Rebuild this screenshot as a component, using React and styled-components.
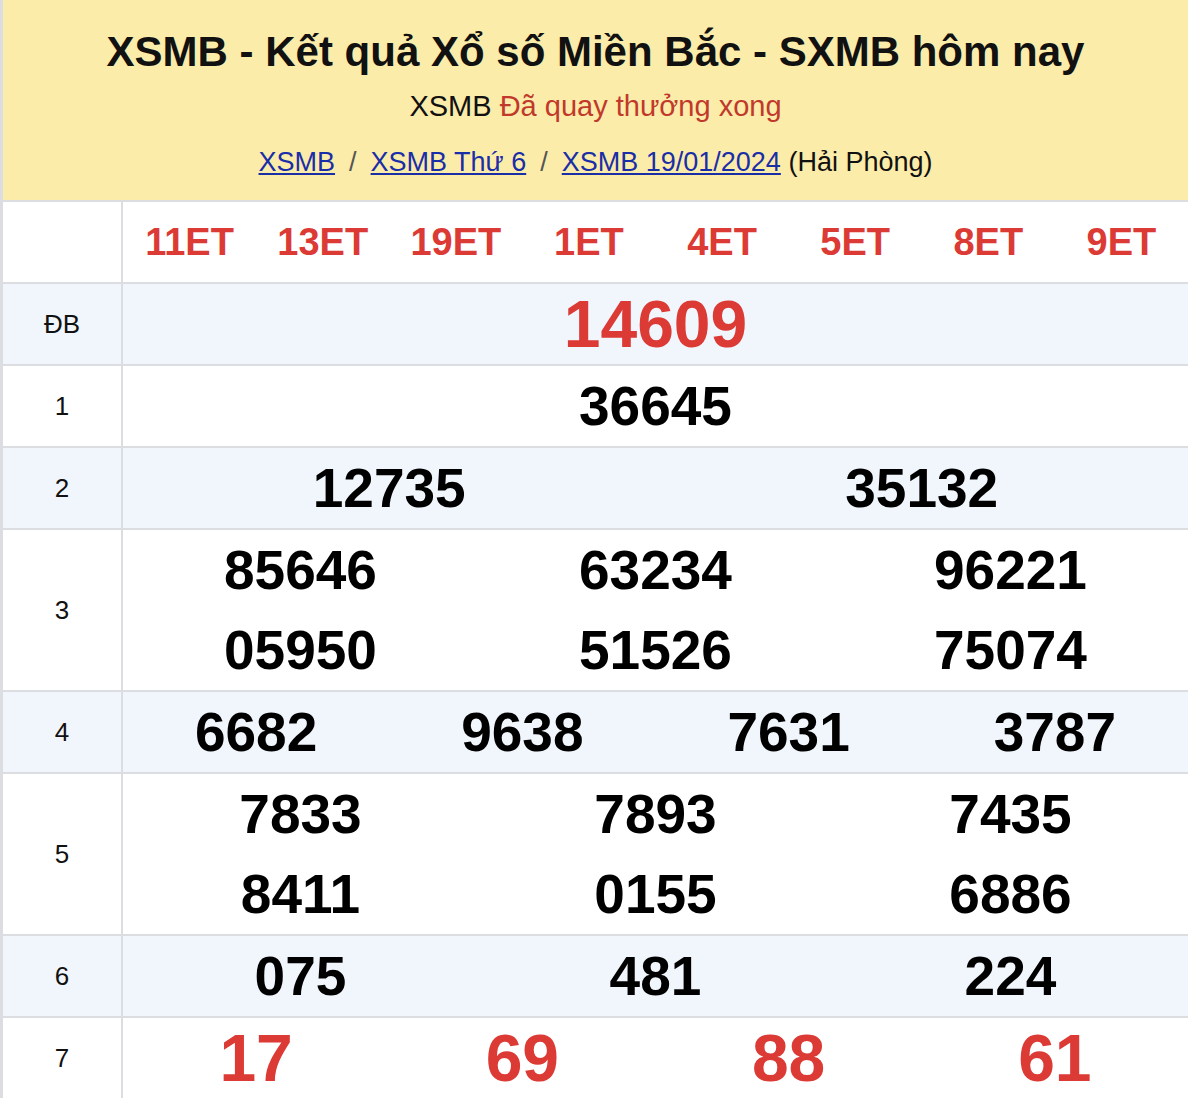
import React from 'react'
import styled, { createGlobalStyle } from 'styled-components'

const Global = createGlobalStyle`
  body { margin: 0; background: #fff; font-family: "Liberation Sans", Arial, sans-serif; }
`

const Wrap = styled.div`
  width: 1188px;
  border-left: 3px solid #dcdde1;
  box-sizing: border-box;
`

const Head = styled.div`
  background: #fcecaa;
  height: 200px;
  box-sizing: border-box;
  padding-top: 26px;
  text-align: center;
  color: #111;
`

const Title = styled.h1`
  margin: 0;
  font-size: 42px;
  font-weight: bold;
  line-height: 52px;
`

const Sub = styled.div`
  font-size: 29px;
  line-height: 34px;
  margin-top: 11px;
  span { color: #c0392b; }
`

const Crumbs = styled.div`
  font-size: 27px;
  line-height: 34px;
  margin-top: 22px;
  a { color: #1a2ea8; text-decoration: underline; }
  i { font-style: normal; color: #555; margin: 0 14px; }
`

const Row = styled.div`
  display: flex;
  border-top: 2px solid #dcdde1;
  background: ${p => (p.$alt ? '#f1f6fd' : '#fff')};
`

const Label = styled.div`
  width: 118px;
  flex: none;
  border-right: 2px solid #dcdde1;
  display: flex;
  align-items: center;
  justify-content: center;
  font-size: 26px;
  color: #111;
`

const Grid = styled.div`
  flex: 1;
  display: grid;
  grid-template-columns: repeat(${p => p.$cols}, 1fr);
  grid-auto-rows: 80px;
  align-items: center;
`

const Num = styled.div`
  text-align: center;
  font-weight: bold;
  font-size: ${p => p.$size || 55}px;
  color: ${p => (p.$red ? '#dc3a35' : '#000')};
`

const rows = [
  { l: 'ĐB', c: 1, n: ['14609'], red: true, size: 66 },
  { l: '1', c: 1, n: ['36645'] },
  { l: '2', c: 2, n: ['12735', '35132'] },
  { l: '3', c: 3, n: ['85646', '63234', '96221', '05950', '51526', '75074'] },
  { l: '4', c: 4, n: ['6682', '9638', '7631', '3787'] },
  { l: '5', c: 3, n: ['7833', '7893', '7435', '8411', '0155', '6886'] },
  { l: '6', c: 3, n: ['075', '481', '224'] },
  { l: '7', c: 4, n: ['17', '69', '88', '61'], red: true, size: 66 },
]

const codes = ['11ET', '13ET', '19ET', '1ET', '4ET', '5ET', '8ET', '9ET']

export default function App() {
  return (
    <>
      <Global />
      <Wrap>
        <Head>
          <Title>XSMB - Kết quả Xổ số Miền Bắc - SXMB hôm nay</Title>
          <Sub>XSMB <span>Đã quay thưởng xong</span></Sub>
          <Crumbs>
            <a href="#">XSMB</a><i>/</i><a href="#">XSMB Thứ 6</a><i>/</i><a href="#">XSMB 19/01/2024</a> (Hải Phòng)
          </Crumbs>
        </Head>
        <Row>
          <Label />
          <Grid $cols={8}>
            {codes.map(c => <Num key={c} $red $size={38}>{c}</Num>)}
          </Grid>
        </Row>
        {rows.map((r, i) => (
          <Row key={r.l} $alt={i % 2 === 0}>
            <Label>{r.l}</Label>
            <Grid $cols={r.c}>
              {r.n.map((n, j) => <Num key={j} $red={r.red} $size={r.size}>{n}</Num>)}
            </Grid>
          </Row>
        ))}
      </Wrap>
    </>
  )
}
